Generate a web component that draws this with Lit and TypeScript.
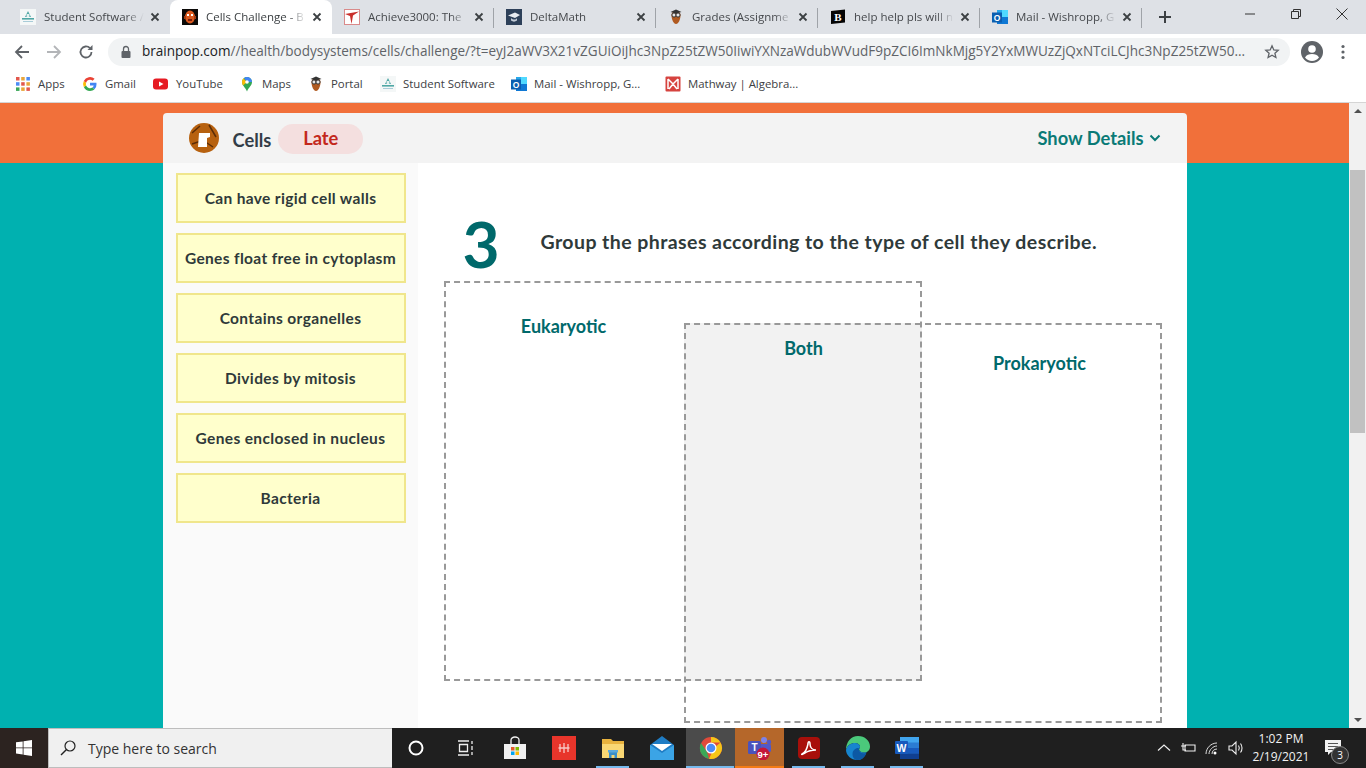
import { LitElement, html, css, svg } from "lit";
import { customElement } from "lit/decorators.js";

const ico = (body: unknown, size = 16, vb = "0 0 16 16") =>
  html`<svg width=${size} height=${size} viewBox=${vb} class="ic">${body}</svg>`;

const studentIcon = () => ico(svg`<rect width="16" height="16" fill="#f4f7f7"/><path d="M8 2 5 8h6z" fill="#4fa7a5"/><rect x="6.600" y="5" width="2.800" height="3" fill="#e4f1f0"/><rect x="2" y="9" width="12" height="1.600" fill="#4fa7a5"/><rect x="3" y="12" width="10" height="1" fill="#a9ccd8"/>`);
const popIcon = () => ico(svg`<rect width="16" height="16" fill="#0c0a08"/><ellipse cx="8" cy="8" rx="5" ry="6.500" fill="#d9591f"/><rect x="5" y="5" width="2" height="2" fill="#fff"/><rect x="9" y="5" width="2" height="2" fill="#fff"/><rect x="6" y="10" width="4" height="2" fill="#7a1f0a"/><rect x="2" y="7" width="2" height="3" fill="#a33c14"/><rect x="12" y="7" width="2" height="3" fill="#a33c14"/>`);
const achieveIcon = () => ico(svg`<rect x=".5" y=".5" width="15" height="15" fill="#fff" stroke="#d98a8a"/><path d="M1 5 15 2.500 9 6.500 7.500 15 6 7z" fill="#c9302c"/>`);
const deltaIcon = () => ico(svg`<rect width="16" height="16" fill="#2d4059"/><path d="M2 6.500 9 3.500l5 2.500-5 3z" fill="#e7ebf0"/><path d="M5 9c2 2 5 2 6 0v2.500c-2 1.500-4 1.500-6 0z" fill="#c3ccd8"/>`);
const owlIcon = () => ico(svg`<path d="M8 2c3 0 4.500 2 4.500 4 0 4.500-2 9-4.500 9S3.500 10.500 3.500 6C3.500 4 5 2 8 2z" fill="#b05a20"/><circle cx="6" cy="6" r="2.100" fill="#e6e6e6" stroke="#333"/><circle cx="10" cy="6" r="2.100" fill="#e6e6e6" stroke="#333"/><path d="M2.500 3 8 .5l5.500 2.500L8 4.500z" fill="#333"/>`);
const brainlyIcon = () => ico(svg`<path d="M1 2 15 .5v13L1 15z" fill="#050505"/><text x="8" y="12" font-size="11" font-weight="900" font-family="Liberation Serif" text-anchor="middle" fill="#fff">B</text>`);
const outlookIcon = () => ico(svg`<rect x="5" y="1" width="11" height="14" fill="#28a8ea"/><rect x="10" y="1" width="6" height="7" fill="#50d9ff"/><rect x="5" y="8" width="11" height="7" fill="#0f78d4"/><rect y="3.500" width="10" height="10" fill="#0a5eb0"/><text x="5" y="11.500" font-size="8.500" font-weight="700" font-family="Liberation Sans" text-anchor="middle" fill="#fff">O</text>`);
const mathwayIcon = () => ico(svg`<rect x=".5" y=".5" width="15" height="15" rx="1" fill="#d6433f"/><path d="M3 3l5 5 5-5M3 3v10M13 3v10M4 13l4-5 4 5" fill="none" stroke="#fff" stroke-width="1.500"/>`);
const appsIcon = () => ico(svg`${[
  ["#e2574c", "#e9a63a", "#4c8bf5"],
  ["#4c8bf5", "#e2574c", "#e9a63a"],
  ["#3aa757", "#e9a63a", "#e2574c"],
].flatMap((row, y) => row.map((c, x) => svg`<rect x=${1 + x * 5.2} y=${1 + y * 5.2} width="3.500" height="3.500" fill=${c}/>`))}`);
const gIcon = () => ico(svg`<path d="M14.500 8.200c0-.5 0-1-.1-1.400H8v2.700h3.700a3.200 3.200 0 0 1-1.400 2.100l2.200 1.700a6.600 6.600 0 0 0 2-5.100z" fill="#4285f4"/><path d="M8 15c1.800 0 3.300-.6 4.500-1.700l-2.200-1.700a4.200 4.200 0 0 1-6.200-2.200L1.800 11.100A6.900 6.900 0 0 0 8 15z" fill="#34a853"/><path d="M4.100 9.400a4.200 4.200 0 0 1 0-2.700L1.800 4.900a6.900 6.900 0 0 0 0 6.200z" fill="#fbbc05"/><path d="M8 3.800c1 0 1.900.4 2.600 1l2-2A6.900 6.900 0 0 0 1.800 4.900l2.300 1.800A4.100 4.100 0 0 1 8 3.800z" fill="#ea4335"/>`);
const ytIcon = () => ico(svg`<rect y="2.500" width="15" height="11" rx="3" fill="#e61b23"/><path d="M6 5.500 10.500 8 6 10.500z" fill="#fff"/>`);
const mapsIcon = () => ico(svg`<path d="M8 1a5 5 0 0 1 5 5c0 3.500-3.500 5.500-5 9.500C6.500 11.500 3 9.500 3 6a5 5 0 0 1 5-5z" fill="#34a853"/><path d="M4.500 2.500 8 6 4 9.500C3.300 8.500 3 7.200 3 6c0-1.400.6-2.600 1.500-3.500z" fill="#fbbc05"/><path d="M8 1a5 5 0 0 1 5 5L8 6 5 2.200C5.800 1.500 6.900 1 8 1z" fill="#4285f4"/><circle cx="8" cy="6" r="1.800" fill="#fff"/>`);

const tabs = [
  { t: "Student Software /", i: studentIcon },
  { t: "Cells Challenge - B", i: popIcon, active: true },
  { t: "Achieve3000: The", i: achieveIcon },
  { t: "DeltaMath", i: deltaIcon },
  { t: "Grades (Assignme", i: owlIcon },
  { t: "help help pls will n", i: brainlyIcon },
  { t: "Mail - Wishropp, G", i: outlookIcon },
];
const marks = [
  { t: "Apps", i: appsIcon, w: 67 },
  { t: "Gmail", i: gIcon, w: 71 },
  { t: "YouTube", i: ytIcon, w: 86 },
  { t: "Maps", i: mapsIcon, w: 69 },
  { t: "Portal", i: owlIcon, w: 72 },
  { t: "Student Software", i: studentIcon, w: 131 },
  { t: "Mail - Wishropp, G...", i: outlookIcon, w: 154 },
  { t: "Mathway | Algebra...", i: mathwayIcon, w: 150 },
];
const cards = [
  "Can have rigid cell walls",
  "Genes float free in cytoplasm",
  "Contains organelles",
  "Divides by mitosis",
  "Genes enclosed in nucleus",
  "Bacteria",
];

const taskIcons = [
  { u: "", c: "", b: svg`<path d="M1 8h22v15H1z" fill="#f1f1f1"/><path d="M8 8V4a4 3 0 0 1 8 0v4" fill="none" stroke="#f1f1f1" stroke-width="1.300"/><rect x="8" y="11" width="3.500" height="3.500" fill="#e25a2b"/><rect x="12.500" y="11" width="3.500" height="3.500" fill="#7fba00"/><rect x="8" y="15.500" width="3.500" height="3.500" fill="#00a4ef"/><rect x="12.500" y="15.500" width="3.500" height="3.500" fill="#ffb900"/>` },
  { u: "", c: "", b: svg`<rect width="24" height="24" fill="#e8352b"/><path d="M8 8v8M12 7v10M16 8v8M6.500 12h11" stroke="#f7c9c5" stroke-width="1.300" fill="none"/>` },
  { u: "u", c: "", b: svg`<path d="M1 3h9l2 2h11v17H1z" fill="#e8b23e"/><path d="M1 8h22v14H1z" fill="#f9d774"/><path d="M8 22v-6h8v6h-2.500v-3h-3v3z" fill="#3c8fc9"/><rect x="7" y="14" width="10" height="2.500" fill="#5da9dc"/>` },
  { u: "", c: "", b: svg`<path d="M0 9 12 0l12 9v15H0z" fill="#1f7cc4"/><path d="M0 9l12 8 12-8v15H0z" fill="#3ba4e6"/><path d="M2 8h20l-10 7z" fill="#fff"/>` },
  { u: "u", c: "act", b: svg`<circle cx="12" cy="12" r="11" fill="#e04a3a"/><path d="M12 1a11 11 0 0 1 9.500 5.500H12z" fill="#f5c518"/><path d="M21.500 6.500A11 11 0 0 1 10 22.800L15 12z" fill="#f5c518"/><path d="M10 22.800A11 11 0 0 1 2 7l6 9z" fill="#3aa757"/><circle cx="12" cy="12" r="5.500" fill="#fff"/><circle cx="12" cy="12" r="4.300" fill="#4c8bf5"/>` },
  { u: "o", c: "teams", b: svg`<circle cx="16" cy="4" r="3" fill="#7b83eb"/><circle cx="21" cy="6" r="2.200" fill="#5059c9"/><rect x="10" y="8" width="13" height="8" rx="1.500" fill="#5059c9"/><rect x="0" y="5" width="13" height="13" rx="1.500" fill="#4b53bc"/><text x="6.500" y="15" font-size="10" font-weight="700" font-family="Liberation Sans" text-anchor="middle" fill="#fff">T</text><circle cx="15" cy="18" r="6.500" fill="#c4173a"/><text x="15" y="21.500" font-size="9.500" font-weight="700" font-family="Liberation Sans" text-anchor="middle" fill="#fff">9+</text>` },
  { u: "u", c: "", b: svg`<rect x="1" y="1" width="22" height="22" rx="4" fill="#a80f0a"/><path d="M5 18c3-1 5-5 6-10 0-3 2-3 2 0 0 4 3 6 6 6-4 0-8 1-11 3-2 1-4 2-3 1z" fill="none" stroke="#fff" stroke-width="1.500"/>` },
  { u: "u", c: "", b: svg`<path d="M12 0c7 0 12 5 12 10.500 0 4-3 6-6 6s-5-1.500-5-3c0-1 1-1.500 1-3S12 7 9 7c-4 0-8 2.500-9 7C0 6 5 0 12 0z" fill="#4bc97b"/><path d="M0 14c1-4.500 5-7 9-7 3 0 5 2 5 3.500 0 1.500-1 2-1 3 0 1.500 2 3 5 3 1 0 2-.2 2.500-.6C19 21 15.500 24 11.500 24 5 24 0 19 0 14z" fill="#1785cf"/><path d="M13 13.500c0 3 4 5 7.500 2.900C19 21 15.500 24 11.500 24c-3 0-5-2.500-5-6s3-6 5.500-6c1 0 1 .5 1 1.500z" fill="#0c59a4"/>` },
  { u: "u", c: "", b: svg`<rect x="5" y="1" width="19" height="22" rx="1" fill="#2b7cd3"/><rect x="5" y="1" width="19" height="5.500" fill="#41a5ee"/><rect x="5" y="12" width="19" height="5.500" fill="#185abd"/><rect x="5" y="17.500" width="19" height="5.500" fill="#103f91"/><rect y="5" width="13" height="13" rx="1" fill="#185abd"/><text x="6.500" y="15.500" font-size="10.500" font-weight="700" font-family="Liberation Sans" text-anchor="middle" fill="#fff">W</text>` },
];

@customElement("app-root")
export class AppRoot extends LitElement {
  static styles = css`
    :host { display: flex; flex-direction: column; width: 1366px; height: 768px; overflow: hidden; font-family: "Open Sans", "Noto Sans", sans-serif; background: #fff; }
    .ic { display: block; flex: none; }

    .tabbar { height: 34px; background: #dee1e6; display: flex; padding-left: 8px; flex: none; }
    .tab { width: 162px; height: 34px; display: flex; align-items: center; padding: 0 8px 0 12px; box-sizing: border-box; font-size: 11.500px; color: #45484c; position: relative; }
    .tab::after { content: ""; position: absolute; right: 0; top: 8px; height: 20px; width: 1px; background: #9fa3a8; }
    .tab.nosep::after, .tab.active::after { display: none; }
    .tab.active { background: #fff; border-radius: 8px 8px 0 0; color: #3c4043; }
    .tab .title { flex: 1; min-width: 0; margin: -2px 0 0 8px; white-space: nowrap; overflow: hidden; -webkit-mask-image: linear-gradient(to right, #000 82%, transparent 100%); mask-image: linear-gradient(to right, #000 82%, transparent 100%); }
    .close { margin-left: 4px; }
    .plus { margin: 9px 0 0 15px; }
    .winctl { margin-left: auto; display: flex; margin-right: 1px; }
    .winbtn { width: 46px; height: 28px; display: flex; align-items: center; justify-content: center; }

    .toolbar { height: 32px; padding: 2px 0 0 14px; display: flex; align-items: center; flex: none; background: #fff; }
    .nav { width: 32px; display: flex; }
    .omni { width: 1182px; height: 28px; margin-left: -2px; background: #f1f3f4; border-radius: 14px; display: flex; align-items: center; box-sizing: border-box; padding: 0 10px 0 10px; font-size: 13.540px; color: #5f6368; }
    .url { margin: -2px 0 0 8px; flex: 1; min-width: 0; white-space: nowrap; overflow: hidden; }
    .url b { font-weight: 400; color: #202124; }
    .profile { margin-left: 11px; }
    .menu { margin-left: 12px; }

    .marks { height: 32px; padding: 0 0 2px 15px; display: flex; align-items: center; flex: none; background: #fff; font-size: 11.400px; color: #3c4043; border-bottom: 1px solid #d5d5d5; }
    .mark { display: flex; align-items: center; gap: 7px; white-space: nowrap; box-sizing: border-box; }
    .mark span { margin-top: -2px; }

    .page { flex: 1; min-height: 0; display: flex; }
    .viewport { flex: 1; min-width: 0; display: flex; flex-direction: column; overflow: hidden; background: #00b1b0; }
    .orange { height: 60px; flex: none; background: #f1703a; display: flex; justify-content: center; align-items: flex-end; }
    .head { width: 1024px; height: 50px; background: #f3f3f3; border-radius: 4px 4px 0 0; display: flex; align-items: center; box-sizing: border-box; padding: 0 26px 0 26px; font-family: Lato, sans-serif; font-weight: 700; font-size: 18.300px; }
    .avatar { margin-right: 14px; }
    .cells { color: #333d47; margin-top: 4px; }
    .late { margin-left: 7px; width: 85px; height: 30px; padding-bottom: 2px; box-sizing: border-box; border-radius: 15px; background: #f4dfdf; color: #c3281c; display: flex; align-items: center; justify-content: center; margin-top: 2px; }
    .details { margin-left: auto; color: #0a7a76; display: flex; align-items: center; gap: 5px; }

    .body { width: 1024px; margin: 0 auto; flex: 1; min-height: 0; background: #fff; display: flex; font-family: Lato, sans-serif; }
    .bank { width: 255px; flex: none; background: #fafafa; padding: 10px 0 0 13px; box-sizing: border-box; display: flex; flex-direction: column; gap: 10px; }
    .card { width: 230px; height: 50px; flex: none; box-sizing: border-box; background: #ffffcc; border: 2px solid #f0e68c; display: flex; align-items: center; justify-content: center; font-weight: 700; font-size: 15.500px; color: #2f3a3a; white-space: nowrap; letter-spacing: .35px; }
    .main { flex: 1; min-width: 0; display: flex; flex-direction: column; padding: 0 0 0 26px; }
    .q { height: 118px; flex: none; display: flex; align-items: flex-start; }
    .num { width: 97px; padding: 41px 0 0 19px; box-sizing: border-box; font-size: 64px; line-height: 80px; font-weight: 700; color: #00696b; flex: none; }
    .prompt { margin: 66px 0 0 0; font-size: 19.500px; line-height: 26px; font-weight: 700; color: #2f3a3a; white-space: nowrap; letter-spacing: .43px; }

    .venn { position: relative; height: 442px; flex: none; }
    .zone { position: absolute; width: 478px; height: 400px; box-sizing: border-box; border: 2px dashed #999; }
    .zone.a { left: 0; top: 0; }
    .zone.b { left: 240px; top: 42px; }
    .overlap { position: absolute; left: 240px; top: 42px; width: 238px; height: 358px; background: #f2f2f2; }
    .label { position: absolute; font-size: 18px; line-height: 22px; font-weight: 700; color: #00696b; transform: translateX(-50%); white-space: nowrap; }

    .scroll { width: 17px; flex: none; background: #f1f1f1; display: flex; flex-direction: column; align-items: center; position: relative; }
    .thumb { position: absolute; top: 67px; left: 1px; width: 15px; height: 263px; background: #c1c1c1; }
    .arrow-up { margin-top: 6px; width: 0; height: 0; border: 4px solid transparent; border-top: 0; border-bottom: 4px solid #505050; }
    .arrow-down { margin-top: auto; margin-bottom: 6px; width: 0; height: 0; border: 4px solid transparent; border-bottom: 0; border-top: 4px solid #505050; }

    .taskbar { height: 40px; flex: none; background: #1f1f1f; display: flex; align-items: stretch; color: #f2f2f2; font-family: "Open Sans", sans-serif; }
    .start { width: 48px; background: #2c2320; display: flex; align-items: center; justify-content: center; }
    .search { width: 344px; background: #f0f0f0; box-sizing: border-box; border: 1px solid #bdbdbd; border-right: none; display: flex; align-items: center; padding-left: 11px; gap: 12px; color: #333; font-size: 14px; }
    .tb { width: 48px; display: flex; align-items: center; justify-content: center; }
    .tv { width: 50px; padding-right: 1px; box-sizing: border-box; display: flex; align-items: center; justify-content: center; }
    .ti { width: 49px; display: flex; align-items: center; justify-content: center; position: relative; box-sizing: border-box; }
    .ti.act { background: #4b4b4b; }
    .ti.teams { background: #b5672a; }
    .ti.u::after, .ti.o::after { content: ""; position: absolute; bottom: 0; height: 2px; }
    .ti.u::after { left: 8px; right: 8px; background: #76b9ed; }
    .ti.act.u::after { left: 0; right: 1px; }
    .ti.o::after { left: 0; right: 0; background: #f47b16; }
    .tray { margin-left: auto; display: flex; align-items: center; margin-right: 14px; }
    .trayi { display: flex; justify-content: center; align-items: center; width: 24px; }
    .clock { font-size: 12px; line-height: 18px; text-align: center; width: 66px; }
    .notif { width: 38px; height: 40px; display: flex; align-items: center; justify-content: center; position: relative; }
    .badge { position: absolute; left: 17px; top: 18px; width: 16px; height: 16px; border-radius: 50%; border: 1px solid #888; background: #333; font-size: 10px; line-height: 16px; text-align: center; color: #fff; }
  `;

  render() {
    const x = (c: string) => ico(svg`<path d="M3.500 3.500l7 7M10.500 3.500l-7 7" stroke=${c} stroke-width="1.800" fill="none"/>`, 14, "0 0 14 14");
    return html`
      <div class="tabbar">
        ${tabs.map((t, i) => html`
          <div class="tab ${t.active ? "active" : ""} ${i === 0 ? "nosep" : ""}">
            ${t.i()}
            <span class="title">${t.t}</span>
            <span class="close">${x("#3c4043")}</span>
          </div>`)}
        <span class="plus">${ico(svg`<path d="M8 2v12M2 8h12" stroke="#3c4043" stroke-width="2" fill="none"/>`)}</span>
        <div class="winctl">
          <div class="winbtn">${ico(svg`<path d="M3 8h10" stroke="#333" stroke-width="1" fill="none"/>`)}</div>
          <div class="winbtn">${ico(svg`<path d="M3.500 5.500h7v7h-7zM5.500 5.500v-2h7v7h-2" stroke="#333" stroke-width="1" fill="none"/>`)}</div>
          <div class="winbtn">${ico(svg`<path d="M2.500 2.500l11 11M13.500 2.500l-11 11" stroke="#333" stroke-width="1" fill="none"/>`)}</div>
        </div>
      </div>
      <div class="toolbar">
        <span class="nav">${ico(svg`<path d="M15 8H2M8 2 2 8l6 6" stroke="#5f6368" stroke-width="1.800" fill="none"/>`)}</span>
        <span class="nav">${ico(svg`<path d="M1 8h13M8 2l6 6-6 6" stroke="#b3b5b8" stroke-width="1.800" fill="none"/>`)}</span>
        <span class="nav">${ico(svg`<path d="M13.500 8A5.500 5.500 0 1 1 12 4.200" stroke="#5f6368" stroke-width="1.800" fill="none"/><path d="M9.500 6h5V1z" fill="#5f6368"/>`)}</span>
        <div class="omni">
          ${ico(svg`<rect x="3.500" y="7" width="9" height="7" rx="1" fill="#5f6368"/><path d="M5.500 7V5a2.500 2.500 0 0 1 5 0v2" stroke="#5f6368" stroke-width="1.300" fill="none"/>`)}
          <span class="url"><b>brainpop.com</b>//health/bodysystems/cells/challenge/?t=eyJ2aWV3X21vZGUiOiJhc3NpZ25tZW50IiwiYXNzaWdubWVudF9pZCI6ImNkMjg5Y2YxMWUzZjQxNTciLCJhc3NpZ25tZW50...</span>
          ${ico(svg`<path d="M8 1.800l1.800 4.100 4.400.4-3.300 2.900 1 4.300L8 11.300l-3.900 2.200 1-4.300-3.300-2.900 4.400-.4z" stroke="#5f6368" stroke-width="1.300" fill="none"/>`)}
        </div>
        <span class="profile">${ico(svg`<circle cx="11" cy="11" r="11" fill="#5f6368"/><circle cx="11" cy="8" r="3.800" fill="#fff"/><path d="M4 16.500c1.500-3 4-3.500 7-3.500s5.500.5 7 3.500A9 9 0 0 1 11 20a9 9 0 0 1-7-3.500z" fill="#fff"/>`, 22, "0 0 22 22")}</span>
        <span class="menu">${ico(svg`<circle cx="2" cy="2.500" r="1.600" fill="#5f6368"/><circle cx="2" cy="8" r="1.600" fill="#5f6368"/><circle cx="2" cy="13.500" r="1.600" fill="#5f6368"/>`, 16, "0 0 4 16")}</span>
      </div>
      <div class="marks">
        ${marks.map((m) => html`<div class="mark" style="width:${m.w}px">${m.i()}<span>${m.t}</span></div>`)}
      </div>
      <div class="page">
        <div class="viewport">
          <div class="orange">
            <div class="head">
              <span class="avatar">${ico(svg`<circle cx="15" cy="15" r="15" fill="#b7610f"/><path d="M3 10l8-7M20 2l7 12M24 24l-9-6M3 21l9-3" stroke="#5c2d06" stroke-width="1.500" fill="none"/><path d="M10 10h11v4l-3 1v9H9z" fill="#fff"/>`, 30, "0 0 30 30")}</span>
              <span class="cells">Cells</span>
              <span class="late">Late</span>
              <span class="details">Show Details ${ico(svg`<path d="M1.500 3.500l4.500 4.500 4.500-4.500" stroke="#0a7a76" stroke-width="2" fill="none"/>`, 12, "0 0 12 12")}</span>
            </div>
          </div>
          <div class="body">
            <div class="bank">${cards.map((c) => html`<div class="card">${c}</div>`)}</div>
            <div class="main">
              <div class="q">
                <div class="num">3</div>
                <div class="prompt">Group the phrases according to the type of cell they describe.</div>
              </div>
              <div class="venn">
                <div class="overlap"></div>
                <div class="zone a"></div>
                <div class="zone b"></div>
                <div class="label" style="left:120px;top:34px">Eukaryotic</div>
                <div class="label" style="left:360px;top:56px">Both</div>
                <div class="label" style="left:596px;top:71px">Prokaryotic</div>
              </div>
            </div>
          </div>
        </div>
        <div class="scroll"><div class="arrow-up"></div><div class="thumb"></div><div class="arrow-down"></div></div>
      </div>
      <div class="taskbar">
        <div class="start">${ico(svg`<path d="M0 2.300 6.700 1.400v6.100H0zM7.500 1.300 16 0v7.500H7.500zM0 8.300h6.700v6.200L0 13.600zM7.500 8.300H16V16l-8.500-1.200z" fill="#fff"/>`)}</div>
        <div class="search">
          ${ico(svg`<circle cx="10" cy="6" r="5" stroke="#222" stroke-width="1.200" fill="none"/><path d="M6.500 9.500 1 15" stroke="#222" stroke-width="1.400" fill="none"/>`)}
          <span>Type here to search</span>
        </div>
        <div class="tb">${ico(svg`<circle cx="8" cy="8" r="6.500" stroke="#fff" stroke-width="2" fill="none"/>`)}</div>
        <div class="tv">${ico(svg`<path d="M1 1h11M1 15h11M2.500 4.500h8v7h-8zM15 1v3M15 6v4M15 12v3" stroke="#eee" stroke-width="1.300" fill="none"/>`)}</div>
        ${taskIcons.map((t) => html`<div class="ti ${t.u} ${t.c}">${ico(t.b, 24, "0 0 24 24")}</div>`)}
        <div class="tray">
          <div class="trayi">${ico(svg`<path d="M2 10.500 8 5l6 5.500" stroke="#eee" stroke-width="1.200" fill="none"/>`)}</div>
          <div class="trayi">${ico(svg`<path d="M5 5h10v6H5zM3 3v3M1 6h5M3 6v4h3" stroke="#eee" stroke-width="1.100" fill="none"/>`)}</div>
          <div class="trayi">${ico(svg`<path d="M2 14c0-6 5-11 11-11M5 14c0-4 4-8 8-8M8 14c0-3 2-5 5-5" stroke="#ddd" stroke-width="1" fill="none"/><circle cx="11" cy="13" r="1.500" fill="#fff"/>`)}</div>
          <div class="trayi">${ico(svg`<path d="M1 6h3l4-4v12l-4-4H1zM10.500 5.500c1 1.500 1 3.500 0 5M12.500 3.500c2 2.500 2 6.500 0 9" stroke="#eee" stroke-width="1.100" fill="none"/>`)}</div>
          <div class="clock">1:02 PM<br />2/19/2021</div>
          <div class="notif">${ico(svg`<path d="M0 0h16v12H6l-3 3v-3H0z" fill="#f2f2f2"/><path d="M3 3.500h10M3 6.500h10M3 9.500h6" stroke="#555" stroke-width="1"/>`)}<span class="badge">3</span></div>
        </div>
      </div>
    `;
  }
}
